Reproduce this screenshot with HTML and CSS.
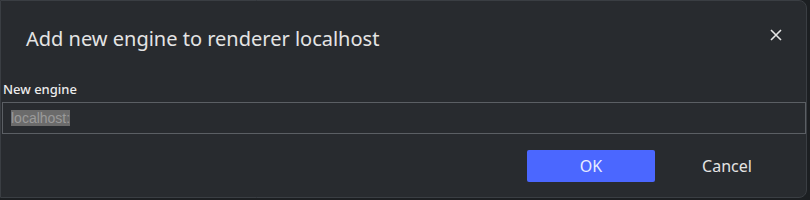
FILE: index.html
```html
<!DOCTYPE html>
<html lang="en">
<head>
  <meta charset="UTF-8" />
  <title>Add new engine</title>
  <link rel="stylesheet" href="styles.css">
</head>
<body>

  <div class="dialog">
    <div class="dialog-header">
      <h2 class="dialog-title">Add new engine to renderer localhost</h2>
      <button class="close-btn" aria-label="Close">
        <svg width="12" height="12" viewBox="0 0 12 12">
          <path d="M1 1 L11 11 M11 1 L1 11" stroke="#e6e6e6" stroke-width="1.6" fill="none"/>
        </svg>
      </button>
    </div>

    <label class="field-label" for="engineInput">New engine</label>
    <div class="field">
      <span class="field-value"><span class="selected">localhost:</span></span>
    </div>

    <div class="dialog-footer">
      <button class="ok-btn">OK</button>
      <button class="cancel-btn">Cancel</button>
    </div>
  </div>

</body>
</html>
```

FILE: styles.css
```css
body {
  margin: 0;
  background: #1c1f22;
  font-family: 'Noto Sans', 'Open Sans', sans-serif;
  color: #e6e6e6;
}

.dialog {
  width: 807px;
  height: 198px;
  box-sizing: border-box;
  background: #282b2f;
  border: 1px solid #3a3e43;
  border-radius: 0 8px 8px 0;
  padding: 0 0 0 1px;
}

.dialog-header {
  display: flex;
  align-items: center;
  justify-content: space-between;
  height: 72px;
  padding: 0 23px 0 24px;
}

.dialog-title {
  margin: 0;
  font-size: 20px;
  font-weight: normal;
  color: #e4e4e4;
  margin-top: 2px;
}

.close-btn {
  background: none;
  border: none;
  padding: 0;
  width: 14px;
  height: 14px;
  display: flex;
  align-items: center;
  justify-content: center;
  cursor: pointer;
  margin-top: -5px;
}

.field-label {
  display: block;
  font-size: 13px;
  font-weight: 500;
  color: #ececec;
  padding-left: 1px;
  height: 29px;
  line-height: 32px;
}

.field {
  height: 32px;
  box-sizing: border-box;
  border: 1px solid #5b5f64;
  display: flex;
  align-items: center;
  padding-left: 8px;
}

.field-value {
  font-family: 'Liberation Sans', Arial, sans-serif;
  font-size: 14px;
  color: #9a9a9a;
}

.selected {
  background: #6b6b6b;
}

.dialog-footer {
  display: flex;
  justify-content: flex-end;
  align-items: center;
  margin-top: 16px;
  padding-right: 19px;
}

.ok-btn {
  width: 128px;
  height: 32px;
  background: #4b67ff;
  color: #e8ecff;
  border: none;
  border-radius: 2px;
  font-family: inherit;
  font-size: 16px;
  cursor: pointer;
}

.cancel-btn {
  width: 120px;
  height: 32px;
  margin-left: 12px;
  background: none;
  border: none;
  color: #e4e4e4;
  font-family: inherit;
  font-size: 16px;
  cursor: pointer;
}
```
